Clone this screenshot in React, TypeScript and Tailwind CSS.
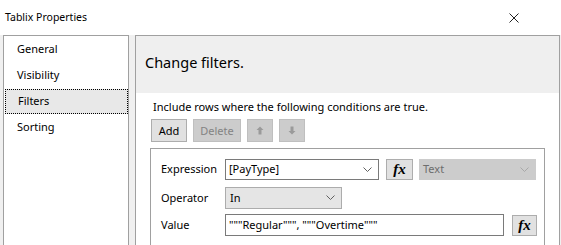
const Chevron = ({ color = "#606060" }: { color?: string }) => (
  <svg width="9" height="6" viewBox="0 0 9 6" className="shrink-0">
    <polyline points="0.5,0.5 4.5,4.5 8.5,0.5" fill="none" stroke={color} strokeWidth="1" />
  </svg>
);

const FxButton = ({ w, h }: { w: string; h: string }) => (
  <button
    className={`${w} ${h} flex items-center justify-center border border-[#adadad] bg-[#e1e1e1] text-black text-[15px] font-bold italic leading-none`}
    style={{ fontFamily: '"Liberation Serif", "DejaVu Serif", serif' }}
  >
    fx
  </button>
);

const ArrowIcon = ({ down }: { down?: boolean }) => (
  <svg width="8" height="9" viewBox="0 0 8 9" className={down ? "rotate-180" : ""}>
    <polygon points="4,0.5 7.5,4 5.5,4 5.5,8.5 2.5,8.5 2.5,4 0.5,4" fill="#9a9a9a" />
  </svg>
);

const App = () => {
  const pages = ["General", "Visibility", "Filters", "Sorting"];

  return (
    <div
      className="w-[561px] h-[245px] overflow-hidden bg-[#f0f0f0] flex flex-col text-[11px] text-black"
      style={{ fontFamily: '"Noto Sans", "Open Sans", sans-serif' }}
    >
      {/* title bar */}
      <div className="h-[35px] shrink-0 bg-white flex items-center justify-between pl-[5px] pr-[42px]">
        <span className="text-[10.5px] leading-none">Tablix Properties</span>
        <svg width="10" height="10" viewBox="0 0 10 10">
          <path d="M0.5 0.5 L9.5 9.5 M9.5 0.5 L0.5 9.5" stroke="#222" strokeWidth="1" />
        </svg>
      </div>

      <div className="flex flex-1 pl-[3px] gap-[6px] min-h-0">
        {/* page list */}
        <div className="w-[126px] h-[230px] shrink-0 bg-white border border-[#a0a0a0] pt-[1px] flex flex-col gap-[1px]">
          {pages.map((p) => (
            <div
              key={p}
              className={`h-[25px] ml-[1px] flex items-center pl-[12px] ${
                p === "Filters" ? "bg-[#e8e8e8] border border-dotted border-black pl-[11px]" : ""
              }`}
            >
              {p}
            </div>
          ))}
        </div>

        {/* filters page */}
        <div className="w-[425px] h-[230px] shrink-0 bg-white border border-[#a0a0a0] flex flex-col">
          <div className="h-[57px] shrink-0 bg-[#efefef] pl-[9px] pt-[16px]">
            <h2 className="text-[14.5px] leading-[20px]">Change filters.</h2>
          </div>

          <div className="pl-[15px] pt-[6px] flex flex-col">
            <p className="pl-[2px] leading-[16px]">Include rows where the following conditions are true.</p>

            {/* toolbar */}
            <div className="flex gap-[6px] mt-[4px]">
              <button className="w-[36px] h-[23px] border border-[#adadad] bg-[#e1e1e1] leading-none">Add</button>
              <button className="w-[48px] h-[23px] border border-[#bfbfbf] bg-[#cccccc] text-[#838383] leading-none">
                Delete
              </button>
              <button className="w-[26px] h-[23px] border border-[#bfbfbf] bg-[#cccccc] flex items-center justify-center">
                <ArrowIcon />
              </button>
              <button className="w-[26px] h-[23px] border border-[#bfbfbf] bg-[#cccccc] flex items-center justify-center">
                <ArrowIcon down />
              </button>
            </div>

            {/* condition */}
            <div className="w-[395px] h-[120px] ml-[-1px] mt-[6px] border border-[#a0a0a0] pl-[10px] pt-[10px] flex flex-col">
              <div className="flex items-center h-[21px]">
                <span className="w-[64px]">Expression</span>
                <div className="w-[154px] h-[21px] border border-[#7a7a7a] bg-white flex items-center justify-between pl-[3px] pr-[6px]">
                  <span>[PayType]</span>
                  <Chevron />
                </div>
                <div className="ml-[7px]">
                  <FxButton w="w-[27px]" h="h-[21px]" />
                </div>
                <div className="ml-[6px] w-[117px] h-[21px] bg-[#cccccc] border border-[#cccccc] flex items-center justify-between pl-[3px] pr-[6px] text-[#6d6d6d]">
                  <span>Text</span>
                  <Chevron color="#a8a8a8" />
                </div>
              </div>

              <div className="flex items-center h-[22px] mt-[7px]">
                <span className="w-[64px]">Operator</span>
                <div className="w-[117px] h-[22px] border border-[#acacac] bg-[#e5e5e5] flex items-center justify-between pl-[4px] pr-[6px]">
                  <span>In</span>
                  <Chevron />
                </div>
              </div>

              <div className="flex items-center h-[22px] mt-[5px]">
                <span className="w-[64px]">Value</span>
                <div className="w-[279px] h-[22px] border border-[#7a7a7a] bg-white flex items-center pl-[3px]">
                  <span>"""Regular""", """Overtime"""</span>
                </div>
                <div className="ml-[8px]">
                  <FxButton w="w-[25px]" h="h-[21px]" />
                </div>
              </div>
            </div>
          </div>
        </div>
      </div>
    </div>
  );
};

export default App;
